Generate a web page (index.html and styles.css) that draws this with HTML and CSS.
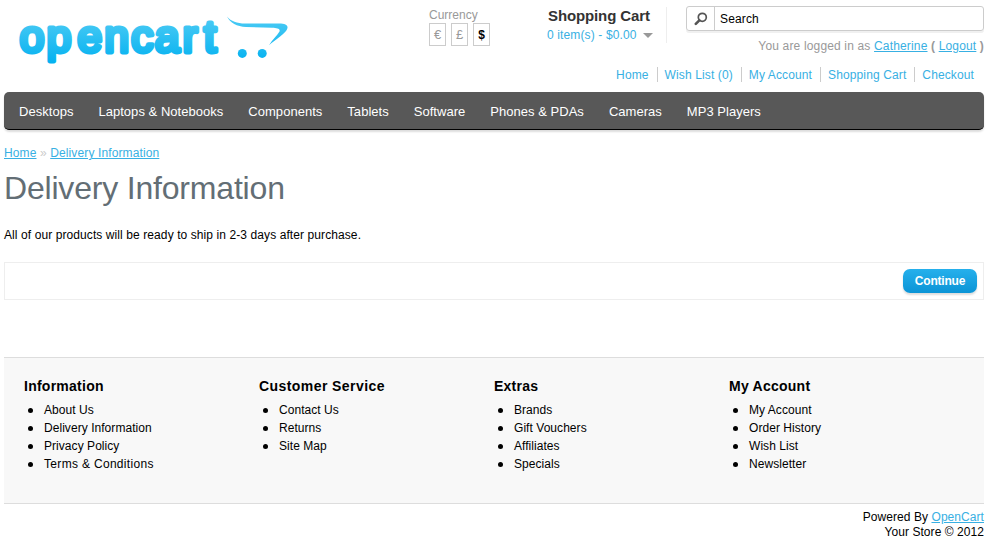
FILE: index.html
```
<!DOCTYPE html>
<html lang="en">
<head>
<meta charset="utf-8">
<title>Delivery Information</title>
<link rel="stylesheet" href="styles.css">
</head>
<body>
<div class="container">
  <header class="header">
    <a class="logo">
      <svg width="290" height="74" viewBox="4 0 290 74" role="img" aria-label="opencart">
        <defs>
          <linearGradient id="brand" gradientUnits="userSpaceOnUse" x1="0" y1="17" x2="0" y2="65">
            <stop offset="0" stop-color="#4dcbf4"/><stop offset="1" stop-color="#00b0f0"/>
          </linearGradient>
        </defs>
        <text class="wordmark" y="52" x="19.700 46.800 77.500 104.500 131.200 155 182.700 204" fill="url(#brand)" stroke="url(#brand)">opencart</text>
        <path fill="url(#brand)" d="M227 16.500C231 21.500 237 23.300 245 23.600L279 23.400C287 23.500 289.500 26 286 31C282 36 275 40 269 45.200C272 40 277 36 279.500 31.500C280.500 28.500 277 28 272 27.700L246 27C237 26.500 230 23 227 16.500Z"/>
        <circle cx="242.300" cy="53.400" r="4.500" fill="url(#brand)"/>
        <circle cx="262.200" cy="53.400" r="4.500" fill="url(#brand)"/>
      </svg>
    </a>
    <div class="currency">
      <div>Currency</div>
      <div class="coins"><a>€</a><a>£</a><a class="on">$</a></div>
    </div>
    <div class="cart">
      <h4>Shopping Cart</h4>
      <a class="total">0 item(s) - $0.00 <i class="caret"></i></a>
    </div>
    <div class="side">
      <div class="search">
        <span class="lens"><svg width="14" height="14" viewBox="0 0 14 14"><circle cx="8.300" cy="5.300" r="4" fill="none" stroke="#555" stroke-width="1.700"/><path d="M5.300 8.300L1.800 11.800" stroke="#555" stroke-width="2.600" stroke-linecap="round"/></svg></span>
        <span class="query">Search</span>
      </div>
      <div class="welcome">You are logged in as <a>Catherine</a> <b>(</b> <a>Logout</a> <b>)</b></div>
      <nav class="links"><a>Home</a><a>Wish List (0)</a><a>My Account</a><a>Shopping Cart</a><a>Checkout</a></nav>
    </div>
  </header>
  <nav class="menu"><a>Desktops</a><a>Laptops &amp; Notebooks</a><a>Components</a><a>Tablets</a><a>Software</a><a>Phones &amp; PDAs</a><a>Cameras</a><a>MP3 Players</a></nav>
  <main>
    <div class="breadcrumb"><a>Home</a> » <a>Delivery Information</a></div>
    <h1>Delivery Information</h1>
    <p>All of our products will be ready to ship in 2-3 days after purchase.</p>
    <div class="buttons"><a class="button">Continue</a></div>
  </main>
  <footer class="footer">
    <section><h3>Information</h3><ul><li>About Us</li><li>Delivery Information</li><li>Privacy Policy</li><li class="wide">Terms &amp; Conditions</li></ul></section>
    <section><h3 class="wide">Customer Service</h3><ul><li>Contact Us</li><li>Returns</li><li>Site Map</li></ul></section>
    <section><h3>Extras</h3><ul><li>Brands</li><li>Gift Vouchers</li><li>Affiliates</li><li>Specials</li></ul></section>
    <section><h3>My Account</h3><ul><li>My Account</li><li>Order History</li><li>Wish List</li><li>Newsletter</li></ul></section>
  </footer>
  <div class="powered">Powered By <a>OpenCart</a><br>Your Store © 2012</div>
</div>
</body>
</html>
```
FILE: styles.css
```
* { box-sizing: border-box; }
html { overflow: hidden; }
body { margin: 0; background: #fff; color: #000; font: 12px/15px "Liberation Sans", Arial, sans-serif; }
h1, h3, h4, p, ul { margin: 0; padding: 0; }
a { color: #38b0e3; }
.container { width: 980px; margin-left: 4px; }
.header { display: grid; grid-template-columns: 425px 118px 120px 317px; height: 92px; }
.logo svg { display: block; }
.wordmark { font: 44px "Liberation Sans", Arial, sans-serif; stroke-width: 4.8px; stroke-linejoin: round; }
.currency { padding-top: 8px; color: #999; }
.coins { display: flex; gap: 5px; }
.coins a { width: 17px; height: 23px; border: 1px solid #ccc; color: #999; font-size: 13px; line-height: 22px; text-align: center; }
.coins .on { color: #000; font-size: 12px; font-weight: bold; }
.cart { height: 36px; margin-top: 7px; border-right: 1px solid #eee; }
.cart h4 { font-size: 15px; line-height: 17px; letter-spacing: -0.12px; color: #333; padding-left: 1px; white-space: nowrap; }
.total { display: flex; align-items: center; line-height: 15px; padding-top: 4px; letter-spacing: 0.13px; white-space: nowrap; }
.caret { margin-left: 6px; border: 5px solid transparent; border-top-color: #999; border-bottom: 0; }
.side { padding-top: 6px; margin-left: 19px; white-space: nowrap; }
.search { display: flex; height: 25px; border: 1px solid #ccc; border-radius: 3px; box-shadow: 0 2px 0 #f0f0f0; }
.lens { width: 28px; border-right: 1px solid #ccc; padding: 5px 0 0 7px; }
.query { padding-left: 5px; line-height: 24px; letter-spacing: 0.15px; }
.welcome { margin-top: 8px; text-align: right; color: #999; letter-spacing: 0.16px; }
.welcome a, .breadcrumb a, .powered a { text-decoration: underline; }
.links { display: flex; justify-content: flex-end; margin: 13px 2px 0 -80px; letter-spacing: 0.12px; line-height: 16px; height: 15px; }
.links a { padding: 0 8px 0 7px; border-right: 1px solid #ccc; }
.links a:last-child { border: 0; }
.menu { display: flex; height: 38px; padding-left: 2px; background: #585858; border-bottom: 1px solid #000; border-radius: 5px; box-shadow: 0 2px 2px #ddd; }
.menu a { padding: 0 12px 0 13px; color: #fff; font-size: 13px; line-height: 39px; letter-spacing: 0.03px; white-space: nowrap; }
main { height: 227px; padding-top: 16px; }
.breadcrumb { color: #ccc; letter-spacing: 0.12px; }
h1 { margin-top: 9px; color: #636e75; font-size: 32px; font-weight: normal; line-height: 37px; letter-spacing: -0.19px; }
p { margin-top: 20px; padding-top: 1px; letter-spacing: 0.09px; }
.buttons { display: flex; justify-content: flex-end; height: 38px; margin-top: 19px; padding: 6px; border: 1px solid #eee; }
.button { width: 74px; height: 24px; border-radius: 7px; background: linear-gradient(#26b0ec, #0b94d6); color: #fff; font-weight: bold; line-height: 24px; letter-spacing: -0.2px; text-align: center; box-shadow: 0 2px 2px #ddd; }
.footer { display: flex; height: 147px; padding: 20px 0 0 20px; border-top: 1px solid #ddd; border-bottom: 1px solid #ddd; background: #f8f8f8; }
.footer section { width: 235px; }
.footer h3 { font-size: 14px; line-height: 16px; letter-spacing: 0.25px; margin-bottom: 7px; }
.footer h3.wide { letter-spacing: 0.43px; }
.footer ul { padding-left: 4px; list-style: none; }
.footer li { display: flex; align-items: center; gap: 11px; line-height: 18px; letter-spacing: 0.05px; }
.footer li::before { content: ""; width: 5px; height: 5px; border-radius: 50%; background: #000; }
.footer li.wide { letter-spacing: 0.32px; }
.powered { padding-top: 6px; text-align: right; letter-spacing: 0.06px; }
```
